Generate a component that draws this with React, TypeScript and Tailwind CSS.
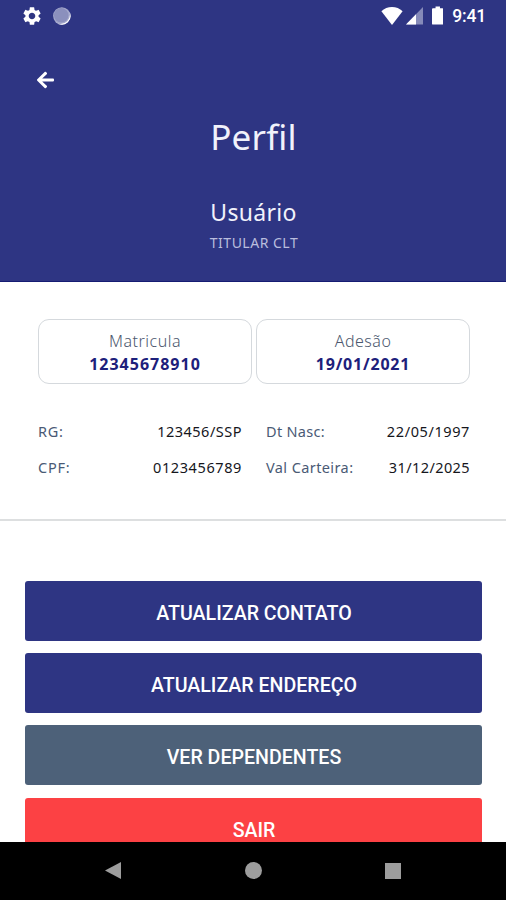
import { FaArrowLeft } from "react-icons/fa";
import { MdSettings } from "react-icons/md";

const dados = [
  { label: "RG:", valor: "123456/SSP", labelClass: "tracking-[0.7px]", valorClass: "tracking-[0.5px]" },
  { label: "Dt Nasc:", valor: "22/05/1997", labelClass: "tracking-[0.3px]", valorClass: "tracking-[0.6px]" },
  { label: "CPF:", valor: "0123456789", labelClass: "tracking-[0.8px]", valorClass: "tracking-[0.6px]" },
  { label: "Val Carteira:", valor: "31/12/2025", labelClass: "tracking-[0.4px]", valorClass: "tracking-[0.4px]" },
];

const botoes = [
  { texto: "ATUALIZAR CONTATO", cor: "bg-[#2e3583]" },
  { texto: "ATUALIZAR ENDEREÇO", cor: "bg-[#2e3583]" },
  { texto: "VER DEPENDENTES", cor: "bg-[#4d6179]" },
  { texto: "SAIR", cor: "bg-[#fc4144]" },
];

function StatusBar() {
  return (
    <div className="flex h-8 items-center justify-between pl-[21px] pr-5">
      <div className="flex items-center gap-[9px] pb-px">
        <MdSettings className="size-[22px]" />
        <svg className="size-5" viewBox="0 0 20 20">
          <circle cx="9.8" cy="10" r="8.7" fill="#a4a8cc" />
          <path d="M17.6 6a8.7 8.7 0 0 1-11.6 11.7A9.5 9.5 0 0 0 17.6 6z" fill="#fff" />
          <circle cx="9.2" cy="9.3" r="7.2" fill="#8b90bd" />
        </svg>
      </div>
      <div className="flex items-center">
        <svg className="h-[18px] w-[22px]" viewBox="0 0 22 18" fill="currentColor">
          <path d="M11 18 .4 4.2C3.2 1.5 7 0 11 0s7.8 1.5 10.6 4.2z" />
        </svg>
        <svg className="ml-[3px] h-[18px] w-[17px]" viewBox="0 0 17 18">
          <path d="M17 0v17.5H0z" fill="#858ab9" />
          <path d="M10 7.2v10.3H0z" fill="currentColor" />
        </svg>
        <svg className="mb-px ml-[9px] h-[19px] w-[11.5px]" viewBox="0 0 12 19" fill="currentColor">
          <path d="M3.7 0h4.6v2H11a1 1 0 0 1 1 1v15a1 1 0 0 1-1 1H1a1 1 0 0 1-1-1V3a1 1 0 0 1 1-1h2.7z" />
        </svg>
        <span className="ml-[9px] pt-[2px] font-[Roboto] text-[17.5px] leading-none font-medium tracking-[-0.2px]">9:41</span>
      </div>
    </div>
  );
}

function Cartao({ titulo, valor, valorClass }: { titulo: string; valor: string; valorClass: string }) {
  return (
    <div className="flex h-[65px] flex-1 flex-col items-center rounded-[11px] border-[1.5px] border-[#d5d9dd] pt-[10px]">
      <span className="text-[16px] leading-[23px] font-light tracking-[0.5px] text-[#4c586e]">{titulo}</span>
      <span className={`text-[16px] leading-[23px] font-bold text-[#1d207b] ${valorClass}`}>{valor}</span>
    </div>
  );
}

export default function App() {
  return (
    <div className="flex h-[900px] w-[506px] flex-col overflow-hidden bg-white font-['Noto_Sans',sans-serif]">
      {/* Cabeçalho */}
      <header className="h-[281.5px] shrink-0 border-b border-[#151c72] bg-[#2e3583] text-white">
        <StatusBar />
        <button className="mt-[38px] ml-[37px] block">
          <FaArrowLeft className="h-5 w-[17px]" />
        </button>
        <div className="flex flex-col items-center">
          <h1 className="mt-[23px] pl-px text-[35px] leading-[48px] tracking-[0.2px] text-[#f1f2fb]">Perfil</h1>
          <h2 className="mt-[35px] pl-px text-[23px] leading-8 tracking-[0.3px] text-[#f1f2fb]">Usuário</h2>
          <p className="mt-[5px] pl-[2px] text-[14px] leading-5 tracking-[0.5px] text-[#b9bddd]">TITULAR CLT</p>
        </div>
      </header>

      {/* Dados do titular */}
      <main className="flex min-h-0 flex-1 flex-col overflow-hidden">
        <section className="shrink-0 border-b-2 border-[#dddfe0] px-9 pt-[37.5px] pb-[40px]">
          <div className="ml-[2px] flex w-[432px] gap-1">
            <Cartao titulo="Matricula" valor="12345678910" valorClass="tracking-[1px]" />
            <Cartao titulo="Adesão" valor="19/01/2021" valorClass="tracking-[0.8px]" />
          </div>
          <dl className="mt-[36px] ml-[2px] grid w-[432px] grid-cols-2 gap-x-6 gap-y-[13px] text-[14.5px] leading-[23px]">
            {dados.map((d) => (
              <div key={d.label} className="flex justify-between">
                <dt className={`text-[#4a5a75] ${d.labelClass}`}>{d.label}</dt>
                <dd className={`text-[#15161c] ${d.valorClass}`}>{d.valor}</dd>
              </div>
            ))}
          </dl>
        </section>

        {/* Ações */}
        <section className="flex flex-col gap-[12.7px] pt-[60px] pr-6 pl-[25px] font-[Roboto]">
          {botoes.map((b) => (
            <button
              key={b.texto}
              className={`h-[59.5px] shrink-0 rounded-[3px] pt-[6px] pl-px text-[19.6px] font-medium text-white ${b.cor}`}
            >
              {b.texto}
            </button>
          ))}
        </section>
      </main>

      {/* Barra de navegação */}
      <nav className="flex h-[58.5px] shrink-0 items-center justify-between bg-black px-[105px] text-[#9d9d9d]">
        <svg className="h-[17px] w-4" viewBox="0 0 16 17" fill="currentColor">
          <path d="M16 0v17L0 8.5z" />
        </svg>
        <span className="size-[17px] rounded-full bg-current" />
        <span className="size-4 bg-current" />
      </nav>
    </div>
  );
}
